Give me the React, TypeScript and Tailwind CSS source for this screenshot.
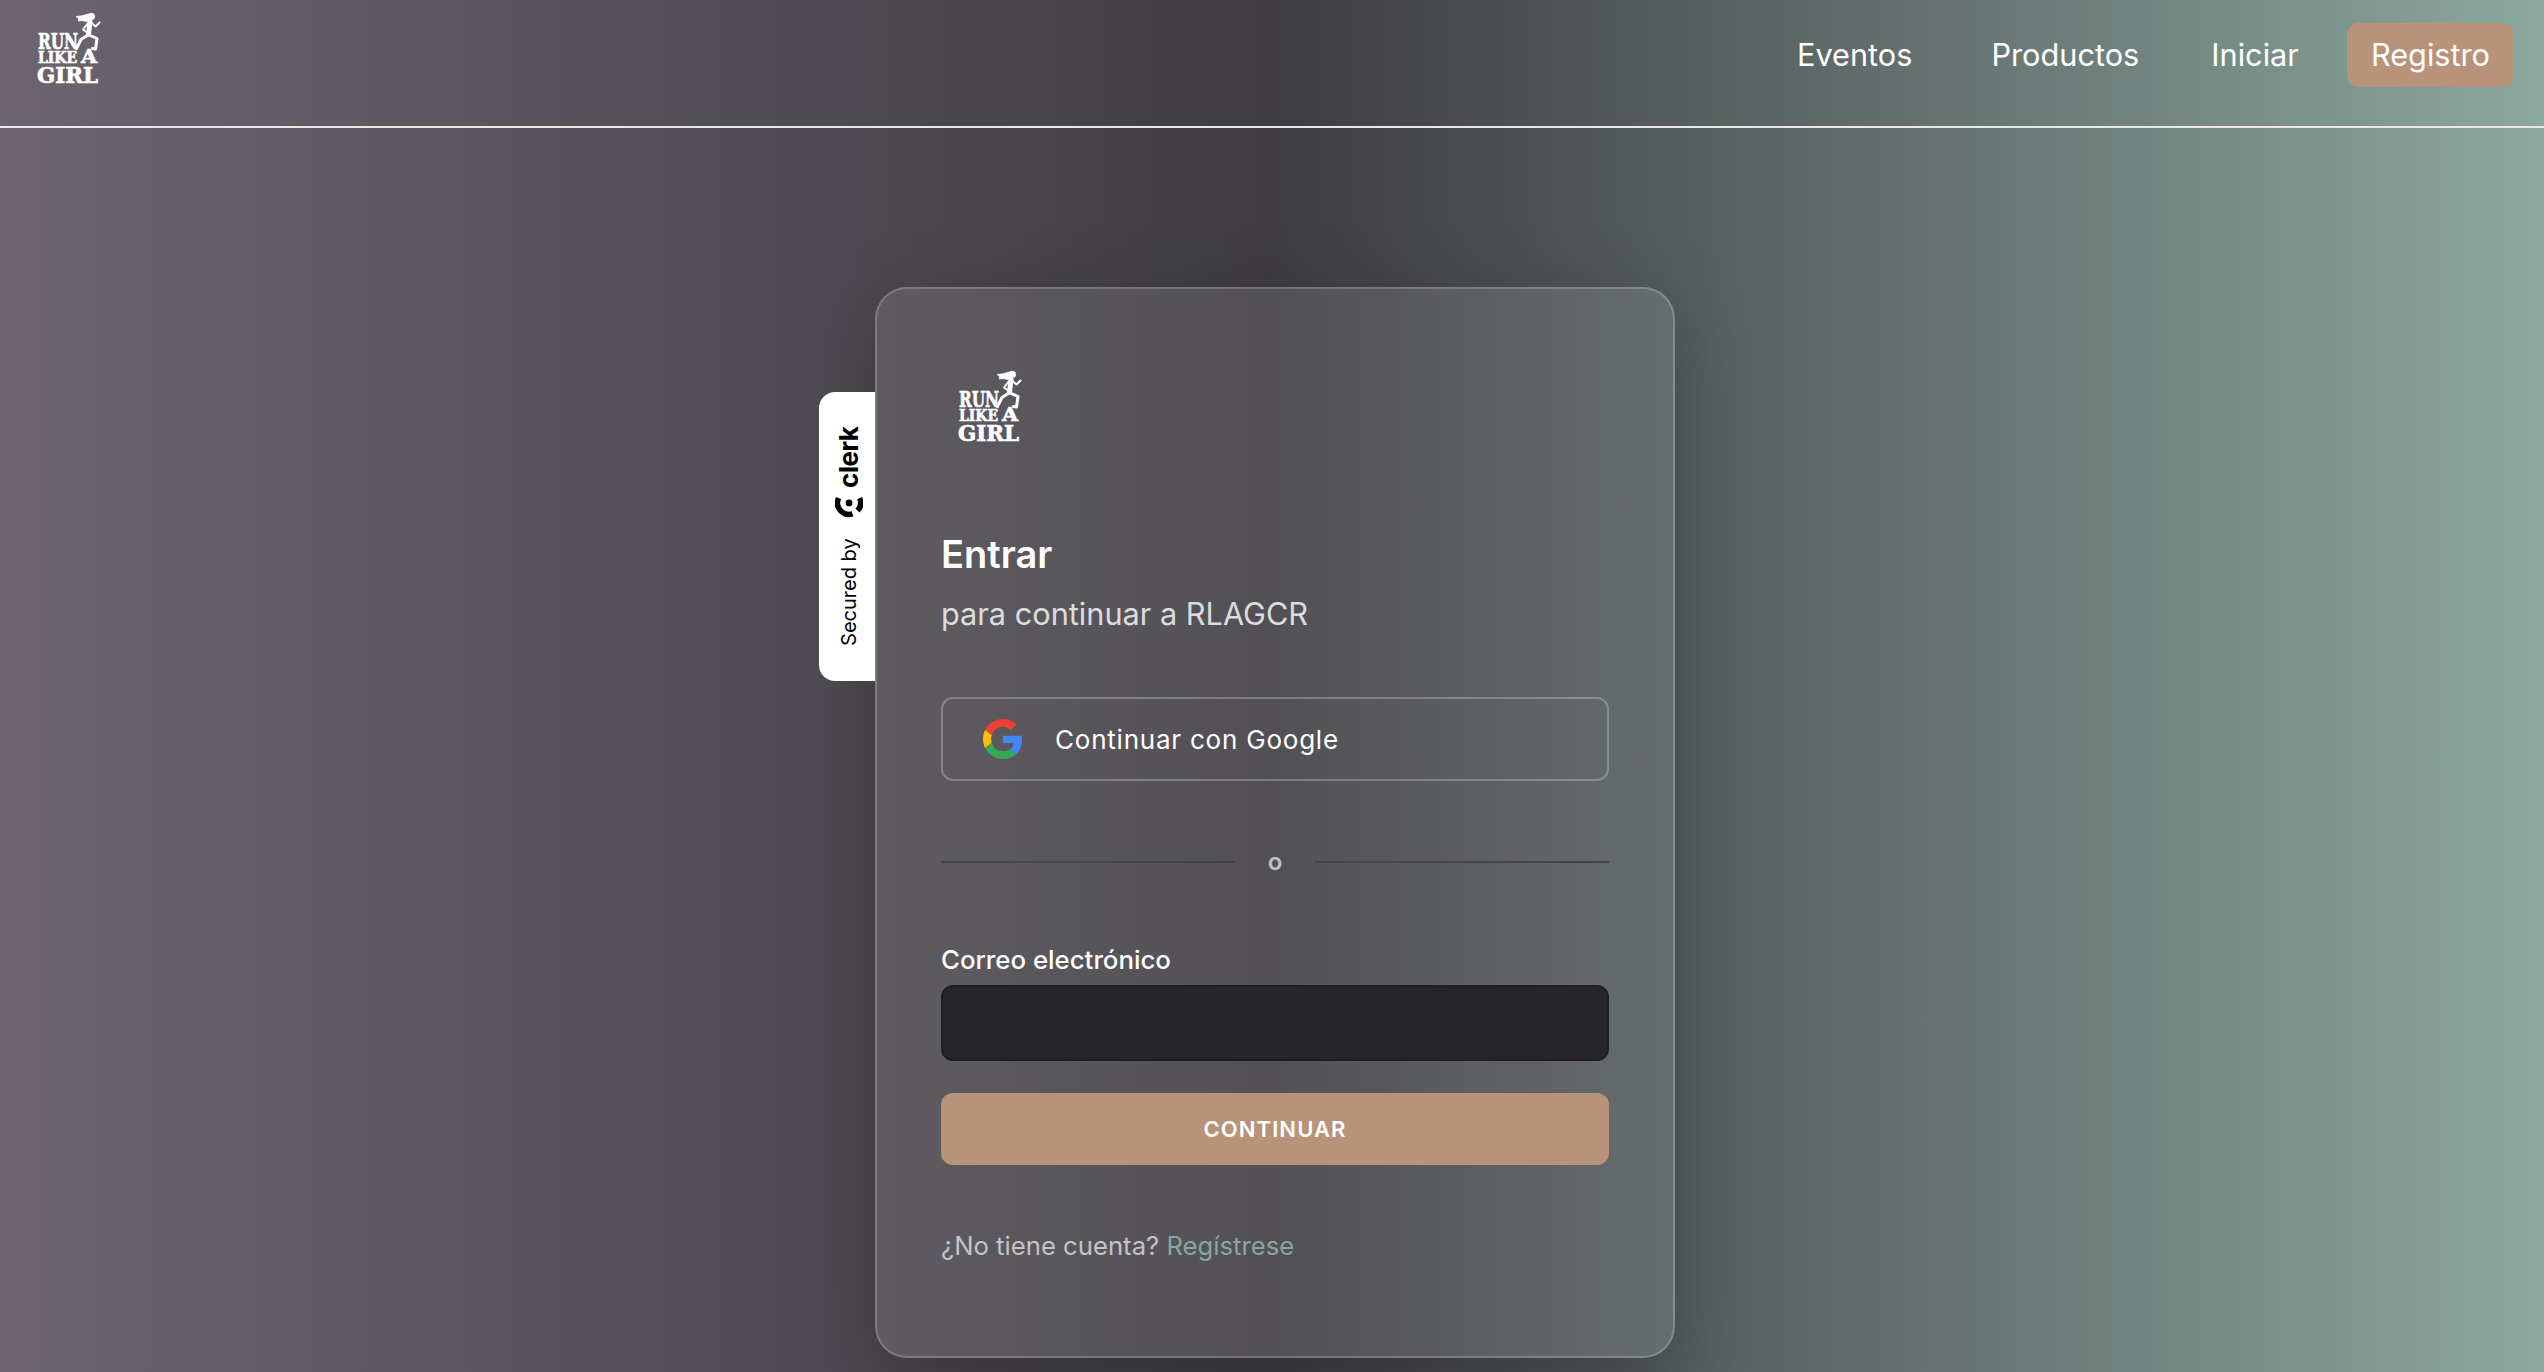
import React from "react";

function Logo({ className }: { className?: string }): React.JSX.Element {
  return (
    <svg
      viewBox="-1 0 65 71"
      className={`overflow-visible ${className ?? ""}`}
      fill="#fff"
      stroke="#fff"
      strokeWidth="0.7"
      fontFamily="'DejaVu Serif', serif"
      fontWeight={700}
    >
      <path d="M54 0.5C50 1 46 3 39 3.5C41 5 42.5 6 41 8C44 7.5 47 7.5 49 8.5L52 7.5Z" />
      <circle cx="54.5" cy="3.5" r="3.2" />
      <g fill="none" stroke="#fff" strokeLinecap="round" strokeLinejoin="round">
        <path d="M53 9L51.5 21" strokeWidth="5" />
        <path d="M54 9.5L58.5 13.5L62.5 9.5" strokeWidth="2" />
        <path d="M51 10L46 16.5L49.5 19" strokeWidth="2" />
        <path d="M51 22L44 26.5L39.5 35.5" strokeWidth="3" />
        <path d="M52 22L60 25.5L58.5 36L55.5 35.5" strokeWidth="3" />
      </g>
      <text x="1" y="36" fontSize="22" textLength="40" lengthAdjust="spacingAndGlyphs">RUN</text>
      <text x="1" y="49.5" fontSize="16" textLength="39" lengthAdjust="spacingAndGlyphs">LIKE</text>
      <text x="44" y="49.5" fontSize="19" textLength="16" lengthAdjust="spacingAndGlyphs">A</text>
      <text x="0" y="69.5" fontSize="23" textLength="61" lengthAdjust="spacingAndGlyphs">GIRL</text>
    </svg>
  );
}

function GoogleIcon(): React.JSX.Element {
  return (
    <svg viewBox="0 0 48 48" className="size-10 shrink-0">
      <path fill="#EA4335" d="M24 9.5c3.54 0 6.71 1.22 9.21 3.6l6.85-6.85C35.9 2.38 30.47 0 24 0 14.62 0 6.51 5.38 2.56 13.22l7.98 6.19C12.43 13.72 17.74 9.5 24 9.5z" />
      <path fill="#4285F4" d="M46.98 24.55c0-1.57-.15-3.09-.38-4.55H24v9.02h12.94c-.58 2.96-2.26 5.48-4.78 7.18l7.73 6c4.51-4.18 7.09-10.36 7.09-17.65z" />
      <path fill="#FBBC05" d="M10.53 28.59c-.48-1.45-.76-2.99-.76-4.59s.27-3.14.76-4.59l-7.98-6.19C.92 16.46 0 20.12 0 24c0 3.88.92 7.54 2.56 10.78l7.97-6.19z" />
      <path fill="#34A853" d="M24 48c6.48 0 11.93-2.13 15.89-5.81l-7.73-6c-2.15 1.45-4.92 2.3-8.16 2.3-6.26 0-11.57-4.22-13.47-9.91l-7.98 6.19C6.51 42.62 14.62 48 24 48z" />
    </svg>
  );
}

function ClerkMark(): React.JSX.Element {
  // drawn as it appears on the tab, the parent's rotation is undone here
  return (
    <svg viewBox="0 0 28 23" className="h-[23px] w-[28px] shrink-0 rotate-180" fill="none" stroke="#000" strokeWidth="5.5">
      <circle cx="14" cy="8" r="3.4" fill="#000" stroke="none" />
      <path d="M3.6 3.2A11.5 11.5 0 0 0 17.5 19" />
      <path d="M24.6 3.2A11.5 11.5 0 0 1 22.5 15.8" />
    </svg>
  );
}

function ClerkTab(): React.JSX.Element {
  return (
    <div className="absolute top-[103px] left-[-58px] flex h-[289px] w-[56px] items-center justify-center rounded-l-2xl bg-white pl-[3px]">
      <div className="flex rotate-180 items-center text-black [writing-mode:vertical-rl]">
        <span className="text-[20px] leading-none font-normal">Secured by</span>
        <span className="mt-[20px] mb-[7px] flex">
          <ClerkMark />
        </span>
        <span className="text-[26px] leading-none font-bold tracking-[-0.02em]">clerk</span>
      </div>
    </div>
  );
}

export default function App(): React.JSX.Element {
  return (
    <div className="min-h-screen overflow-hidden bg-gradient-to-r from-[#6c6570] via-[#3f3d42] to-[#8ba89e] font-['Inter',sans-serif] text-white">
      <header className="flex h-[128px] items-center justify-between border-b-2 border-[#e8e8e8] pr-[30px] pl-[36px]">
        <Logo className="mb-[30px] h-[71px] w-[65px]" />
        <nav className="mb-[16px] flex items-center text-[30.7px] leading-none">
          <a className="mr-[79px]">Eventos</a>
          <a className="mr-[72px]">Productos</a>
          <a className="mr-[48px]">Iniciar</a>
          <a className="rounded-xl bg-[#b89379] px-6 py-[17px]">Registro</a>
        </nav>
      </header>

      <main className="flex justify-center pt-[159px] pl-[6px]">
        <div className="relative w-[800px] rounded-[32px] border-2 border-white/20 bg-white/10 px-[64px] pt-[82px] pb-[92px] shadow-[0_24px_80px_rgba(0,0,0,0.25)]">
          <ClerkTab />
          <Logo className="ml-[16px] h-[71px] w-[65px]" />

          <h1 className="mt-[88px] text-[38px] leading-[48px] font-semibold">Entrar</h1>
          <p className="mt-[14px] text-[30.7px] leading-[44px] text-[#dcdcde]">para continuar a RLAGCR</p>

          <button className="mt-[61px] flex h-[84px] w-full items-center gap-[32px] rounded-xl border-2 border-white/25 px-[40px] text-[26px] font-normal tracking-[0.03em]">
            <GoogleIcon />
            Continuar con Google
          </button>

          <div className="mt-[63px] flex items-center">
            <div className="h-[2px] flex-1 bg-[#454449]" />
            <span className="w-[80px] text-center text-[24px] leading-[36px] font-semibold text-[#c0c0c2]">o</span>
            <div className="h-[2px] flex-1 bg-[#454449]" />
          </div>

          <label className="mt-[62px] block text-[25.8px] leading-[36px] font-medium">Correo electrónico</label>
          <div className="mt-[7px] h-[76px] rounded-xl border-2 border-[#1f1e22] bg-[#26252a]" />

          <button className="mt-[32px] h-[72px] w-full rounded-xl bg-[#b89379] text-[22px] font-semibold tracking-[0.05em]">
            CONTINUAR
          </button>

          <p className="mt-[63px] text-[25.7px] leading-[36px] text-[#c4c3c7]">
            ¿No tiene cuenta? <a className="text-[#86a79d]">Regístrese</a>
          </p>
        </div>
      </main>
    </div>
  );
}
